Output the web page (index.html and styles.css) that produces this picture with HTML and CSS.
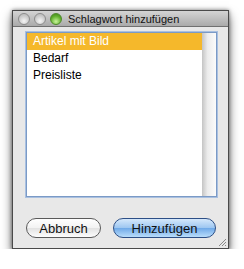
FILE: index.html
```html
<!DOCTYPE html>
<html lang="de">
<head>
<meta charset="UTF-8">
<title>Schlagwort hinzufügen</title>
<link rel="stylesheet" href="styles.css">
</head>
<body>

<div class="window">
  <div class="titlebar">
    <div class="lights">
      <span class="light"></span>
      <span class="light"></span>
      <span class="light light-green"></span>
    </div>
    <div class="title">Schlagwort hinzufügen</div>
  </div>

  <div class="content">
    <div class="listbox">
      <ul class="items">
        <li class="item selected">Artikel mit Bild</li>
        <li class="item">Bedarf</li>
        <li class="item">Preisliste</li>
      </ul>
      <div class="scrolltrack"></div>
    </div>

    <div class="buttons">
      <button class="btn btn-cancel">Abbruch</button>
      <button class="btn btn-default">Hinzufügen</button>
    </div>
  </div>

  <svg class="grip" width="9" height="9" viewBox="0 0 9 9">
    <path d="M8 1 L1 8 M8 4 L4 8 M8 7 L7 8" stroke="#8a8a8a" stroke-width="1"/>
  </svg>
</div>

</body>
</html>
```

FILE: styles.css
```css
body {
  margin: 0;
  background: #fff;
  font-family: "Liberation Sans", "DejaVu Sans", sans-serif;
}

.window {
  position: relative;
  width: 217px;
  height: 239px;
  margin: 10px 0 0 12px;
  box-sizing: border-box;
  background: #e8e8e8;
  border: 1px solid #4a4a4a;
  box-shadow: 0 6px 10px rgba(0, 0, 0, 0.55), 0 0 4px rgba(0, 0, 0, 0.5);
}

/* title bar */
.titlebar {
  display: flex;
  align-items: center;
  height: 15px;
  background: linear-gradient(#d4d4d4, #aaaaaa);
  border-bottom: 1px solid #707070;
}
.lights {
  display: flex;
  gap: 4px;
  padding-left: 5px;
}
.light {
  width: 12px;
  height: 12px;
  box-sizing: border-box;
  border-radius: 50%;
  border: 1px solid #8c8c8c;
  background: radial-gradient(circle at 50% 70%, #f6f6f6, #c2c2c2 70%);
}
.light-green {
  border-color: #4f8a2a;
  background: radial-gradient(circle at 50% 75%, #c8f59a, #5fae2b 60%, #3f7f18);
}
.title {
  margin-left: 6px;
  font-size: 11px;
  color: #111;
}

/* content */
.content {
  padding: 5px 11px 0 13px;
}
.listbox {
  display: flex;
  height: 165px;
  box-sizing: border-box;
  border: 1px solid #7b9ac6;
  box-shadow: 0 0 0 1px #a9c0e0;
  background: #fff;
}
.items {
  flex: 1;
  margin: 0;
  padding: 0;
  list-style: none;
}
.item {
  height: 17px;
  line-height: 17px;
  padding-left: 6px;
  font-size: 12px;
  color: #000;
}
.item.selected {
  background: #f5b82b;
  color: #fff;
}
.scrolltrack {
  width: 14px;
  background: linear-gradient(to right, #c4c4c4, #ececec 40%, #fbfbfb);
}

/* buttons */
.buttons {
  display: flex;
  gap: 12px;
  margin-top: 21px;
}
.btn {
  height: 20px;
  border-radius: 10px;
  font-family: "Liberation Sans", "DejaVu Sans", sans-serif;
  font-size: 13px;
  color: #111;
  padding: 0;
}
.btn-cancel {
  width: 75px;
  border: 1px solid #5a5a5a;
  background: linear-gradient(#ffffff, #f2f2f2 50%, #e2e2e2 51%, #fdfdfd);
}
.btn-default {
  width: 103px;
  border: 1px solid #2d4f86;
  background: linear-gradient(#d5e8fb, #9cc6f1 50%, #6fa9e8 51%, #b9ddfb);
}

.grip {
  position: absolute;
  right: 1px;
  bottom: 1px;
}
```
